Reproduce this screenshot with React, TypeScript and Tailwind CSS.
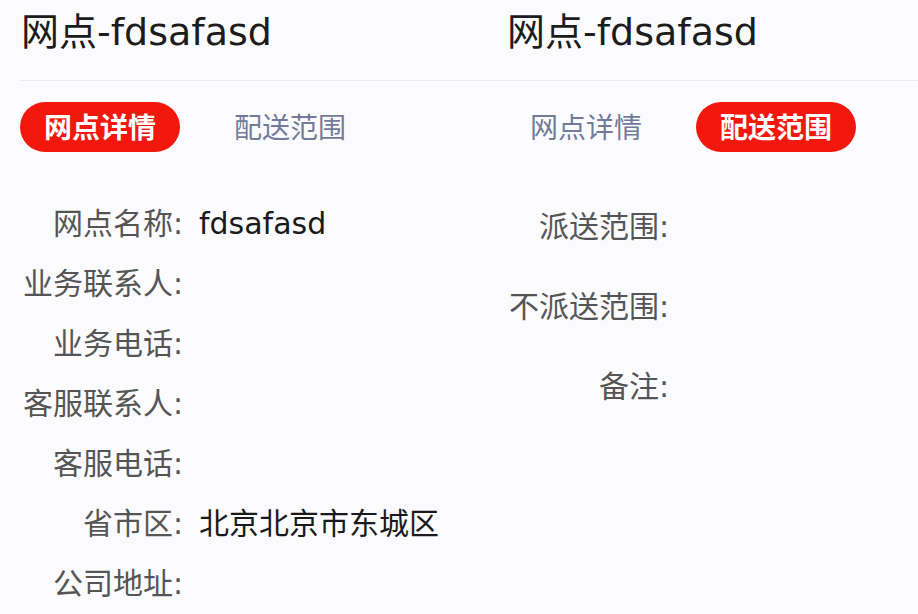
const FONT = "font-['DejaVu_Sans','Noto_Sans_CJK_SC',sans-serif]";

interface Field {
  label: string;
  value?: string;
}

const detailFields: Field[] = [
  { label: '网点名称:', value: 'fdsafasd' },
  { label: '业务联系人:' },
  { label: '业务电话:' },
  { label: '客服联系人:' },
  { label: '客服电话:' },
  { label: '省市区:', value: '北京北京市东城区' },
  { label: '公司地址:' },
];

const rangeFields: Field[] = [
  { label: '派送范围:' },
  { label: '不派送范围:' },
  { label: '备注:' },
];

const Tabs = ({ active }: { active: 0 | 1 }) => (
  <div className="mt-[21px] ml-[20px] flex gap-[30px]">
    {['网点详情', '配送范围'].map((t, i) =>
      i === active ? (
        <div
          key={t}
          className="flex h-[50px] w-[160px] items-center justify-center rounded-full bg-[#f3180d] pt-[3px] text-[28px] font-bold leading-none text-white"
        >
          {t}
        </div>
      ) : (
        <div
          key={t}
          className="flex h-[50px] w-[160px] items-center justify-center pt-[4px] text-[28px] leading-none text-[#727b98]"
        >
          {t}
        </div>
      ),
    )}
  </div>
);

const Panel = ({
  active,
  fields,
  rowClass,
  listClass,
  lineClass,
  className = '',
}: {
  active: 0 | 1;
  fields: Field[];
  rowClass: string;
  listClass: string;
  lineClass: string;
  className?: string;
}) => (
  <div className={`flex flex-col ${className}`}>
    <div className={`h-[81px] border-b border-[#ececee] pt-[13px] ${lineClass}`}>
      <h1 className="text-[38px] font-normal leading-none text-[#1c1c1c] whitespace-nowrap">
        网点-fdsafasd
      </h1>
    </div>
    <Tabs active={active} />
    <div className={`flex flex-col ${listClass}`}>
      {fields.map((f) => (
        <div key={f.label} className={`flex items-center ${rowClass}`}>
          <div className="ml-[20px] w-[163px] shrink-0 text-right text-[30px] leading-none text-[#555555] whitespace-nowrap">
            {f.label}
          </div>
          {f.value && (
            <div className="ml-[16px] text-[30px] leading-none text-[#1a1a1a] whitespace-nowrap">
              {f.value}
            </div>
          )}
        </div>
      ))}
    </div>
  </div>
);

export default function App() {
  return (
    <div className={`flex h-[614px] w-[918px] overflow-hidden bg-[#fbfbfd] ${FONT}`}>
      <Panel
        active={0}
        fields={detailFields}
        rowClass="h-[60px]"
        listClass="mt-[42px]"
        lineClass="ml-[20px] pl-[1px]"
        className="w-[486px] shrink-0"
      />
      <Panel
        active={1}
        fields={rangeFields}
        rowClass="h-[80px]"
        listClass="mt-[35px]"
        lineClass="pl-[21px]"
        className="flex-1"
      />
    </div>
  );
}
